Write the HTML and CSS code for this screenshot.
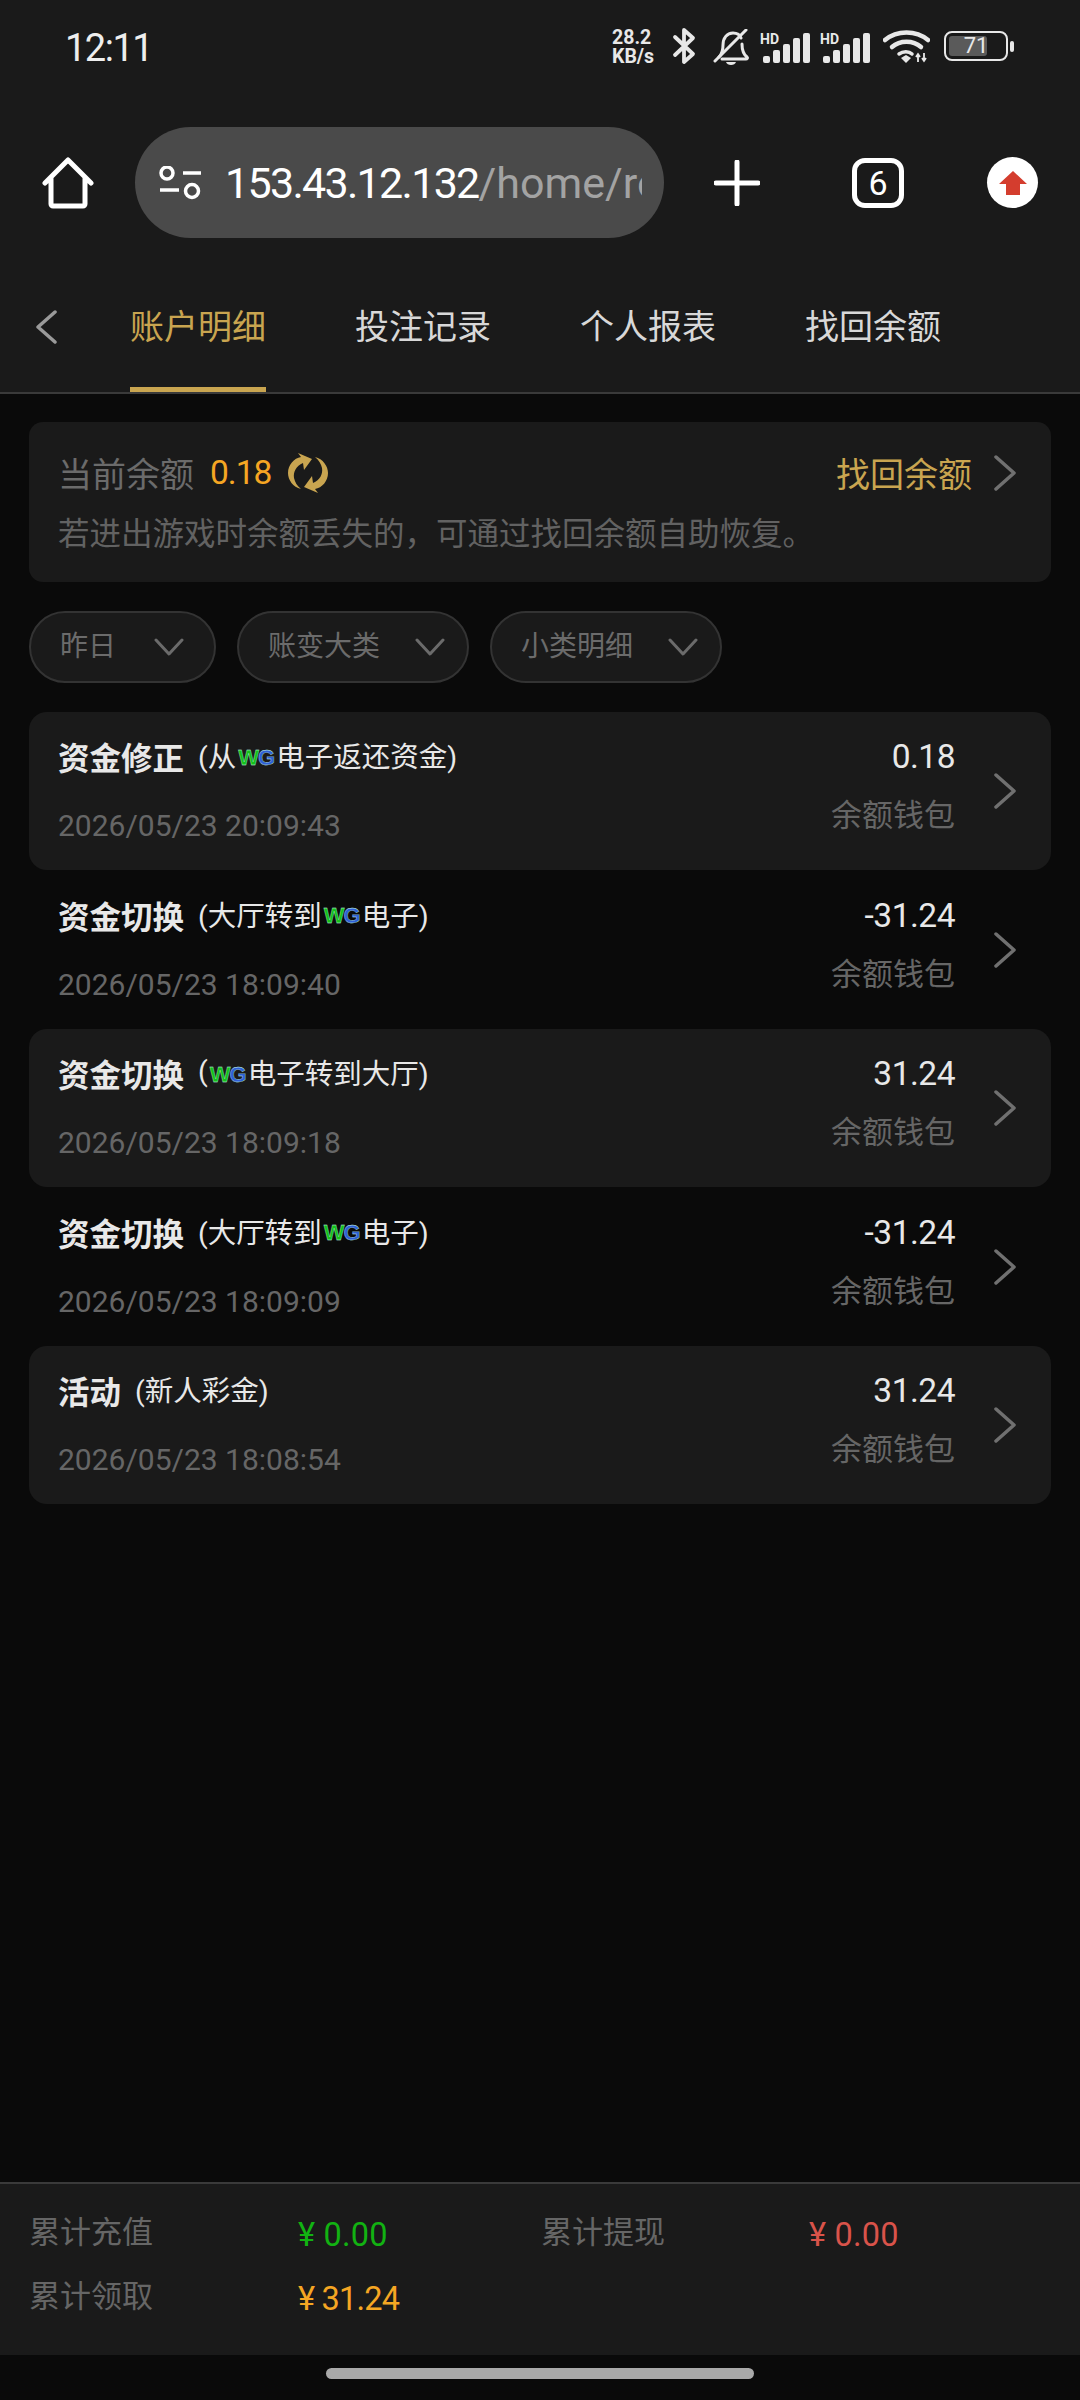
FILE: index.html
```html
<!DOCTYPE html>
<html lang="zh-CN">
<head>
<meta charset="utf-8">
<title>账户明细</title>
<link rel="stylesheet" href="styles.css">
</head>
<body>
<div class="page">
  <header class="status">
    <span class="time">12:11</span>
    <div class="status-icons">
      <span class="speed">28.2<br>KB/s</span>
      <svg class="i-bt" viewBox="0 0 25 38"><path d="M3 10 21 27 12 35V3l9 8L3 28" fill="none" stroke="#e8e8e8" stroke-width="3.8" stroke-linejoin="round" stroke-linecap="round"/></svg>
      <svg class="i-bell" viewBox="0 0 36 38"><path d="M6 28c3-3 4-6 4-12 0-7 4-12 10-12 4 0 7 2 8 5M29 15c0 6 1 10 5 13 1 1 0 2-1 2H9" fill="none" stroke="#e8e8e8" stroke-width="3" stroke-linecap="round"/><path d="M2 32 33 1" stroke="#e8e8e8" stroke-width="3" stroke-linecap="round"/><path d="M13 33h10c-1 4-9 4-10 0z" fill="#e8e8e8"/></svg>
      <div class="sig"><span class="hd">HD</span><svg class="i-sig" viewBox="0 0 50 32"><g fill="#e8e8e8"><rect x="3" y="24" width="7" height="7" rx="2"/><rect x="13" y="18" width="7" height="13" rx="2"/><rect x="23" y="12" width="7" height="19" rx="2"/><rect x="33" y="6" width="7" height="25" rx="2"/><rect x="43" y="1" width="7" height="30" rx="2"/></g></svg></div>
      <div class="sig"><span class="hd">HD</span><svg class="i-sig" viewBox="0 0 50 32"><g fill="#e8e8e8"><rect x="3" y="24" width="7" height="7" rx="2"/><rect x="13" y="18" width="7" height="13" rx="2"/><rect x="23" y="12" width="7" height="19" rx="2"/><rect x="33" y="6" width="7" height="25" rx="2"/><rect x="43" y="1" width="7" height="30" rx="2"/></g></svg></div>
      <svg class="i-wifi" viewBox="0 0 47 35"><g fill="none" stroke="#e8e8e8" stroke-width="4.500" stroke-linecap="round"><path d="M2 11c12-10 31-10 43 0"/><path d="M9 18c8-7 21-7 29 0"/><path d="M16 25c4-3 10-3 13 0" stroke-width="3.500"/></g><path d="M18 29l5-3 5 3-5 5z" fill="#e8e8e8"/><path d="M35 25v8M33 28l2-3 2 3M41 24v8M39 29l2 3 2-3" fill="none" stroke="#e8e8e8" stroke-width="1.800"/></svg>
      <div class="battery"><div class="battery-body"><div class="battery-fill"></div><span class="battery-num">71</span></div><div class="battery-nub"></div></div>
    </div>
  </header>

  <div class="browser">
    <svg class="i-home" viewBox="0 0 52 52"><path d="M3 26 26 3l23 23M9 21v26a2 2 0 0 0 2 2h30a2 2 0 0 0 2-2V21" fill="none" stroke="#fff" stroke-width="5" stroke-linecap="round" stroke-linejoin="round"/></svg>
    <div class="address">
      <svg class="i-tune" viewBox="0 0 42 34"><g fill="none" stroke="#fff" stroke-width="3.500"><circle cx="8" cy="7" r="6"/><circle cx="33" cy="25" r="6.500"/><path d="M24 7h18M1 24h19"/></g></svg>
      <div class="url"><span class="host">153.43.12.132</span><span class="path">/home/record</span></div>
    </div>
    <svg class="i-plus" viewBox="0 0 46 46"><path d="M2 23h42M23 2v42" stroke="#fff" stroke-width="5" stroke-linecap="round"/></svg>
    <div class="tabcount">6</div>
    <div class="upload"><svg class="i-up" viewBox="0 0 28 26"><path d="M14 1 28 14H21V25H7V14H0z" fill="#d43d2e"/></svg></div>
  </div>

  <nav class="tabs">
    <svg class="i-back" viewBox="0 0 22 34"><path d="M20 2 3 17l17 15" fill="none" stroke="#9a9a9a" stroke-width="3.500" stroke-linecap="round" stroke-linejoin="round"/></svg>
    <div class="tab tab-on">账户明细</div>
    <div class="tab">投注记录</div>
    <div class="tab">个人报表</div>
    <div class="tab">找回余额</div>
  </nav>

  <main class="main">
    <section class="balance">
      <div class="balance-top">
        <span class="balance-label">当前余额</span>
        <span class="balance-val">0.18</span>
        <svg class="i-refresh" viewBox="0 0 42 44"><g fill="#c9a550"><path d="M25 8 17 19l-1-7C9 15 6 21 7 27c1 4 3 8 7 11C6 36 1 29 1 22 1 14 7 7 14 6L11 2z"/><path d="M17 36 25 25l1 7c7-3 10-9 9-15-1-4-3-8-7-11 8 2 13 9 13 16 0 8-6 15-13 16l3 4z"/></g></svg>
        <span class="balance-link">找回余额</span>
        <svg class="i-chev" viewBox="0 0 24 36"><path d="M3 2 21 18 3 34" fill="none" stroke="#707070" stroke-width="3.500" stroke-linecap="round" stroke-linejoin="round"/></svg>
      </div>
      <p class="balance-note">若进出游戏时余额丢失的，可通过找回余额自助恢复。</p>
    </section>

    <div class="filters">
      <div class="filter filter-s"><span>昨日</span><svg class="i-down" viewBox="0 0 30 18"><path d="M2 2l13 14L28 2" fill="none" stroke="#6b6b6b" stroke-width="3" stroke-linecap="round" stroke-linejoin="round"/></svg></div>
      <div class="filter"><span>账变大类</span><svg class="i-down" viewBox="0 0 30 18"><path d="M2 2l13 14L28 2" fill="none" stroke="#6b6b6b" stroke-width="3" stroke-linecap="round" stroke-linejoin="round"/></svg></div>
      <div class="filter"><span>小类明细</span><svg class="i-down" viewBox="0 0 30 18"><path d="M2 2l13 14L28 2" fill="none" stroke="#6b6b6b" stroke-width="3" stroke-linecap="round" stroke-linejoin="round"/></svg></div>
    </div>

    <div class="list">
      <article class="row row-alt">
        <div class="row-left">
          <div class="row-title"><b>资金修正</b><span class="row-sub">(从<span class="wg"><i class="wg-w">W</i><i class="wg-g">G</i></span>电子返还资金)</span></div>
          <div class="row-date">2026/05/23 20:09:43</div>
        </div>
        <div class="row-right"><div class="row-amt">0.18</div><div class="row-wallet">余额钱包</div></div>
        <svg class="i-chev" viewBox="0 0 24 36"><path d="M3 2 21 18 3 34" fill="none" stroke="#707070" stroke-width="3.500" stroke-linecap="round" stroke-linejoin="round"/></svg>
      </article>
      <article class="row">
        <div class="row-left">
          <div class="row-title"><b>资金切换</b><span class="row-sub">(大厅转到<span class="wg"><i class="wg-w">W</i><i class="wg-g">G</i></span>电子)</span></div>
          <div class="row-date">2026/05/23 18:09:40</div>
        </div>
        <div class="row-right"><div class="row-amt">-31.24</div><div class="row-wallet">余额钱包</div></div>
        <svg class="i-chev" viewBox="0 0 24 36"><path d="M3 2 21 18 3 34" fill="none" stroke="#707070" stroke-width="3.500" stroke-linecap="round" stroke-linejoin="round"/></svg>
      </article>
      <article class="row row-alt">
        <div class="row-left">
          <div class="row-title"><b>资金切换</b><span class="row-sub">(<span class="wg"><i class="wg-w">W</i><i class="wg-g">G</i></span>电子转到大厅)</span></div>
          <div class="row-date">2026/05/23 18:09:18</div>
        </div>
        <div class="row-right"><div class="row-amt">31.24</div><div class="row-wallet">余额钱包</div></div>
        <svg class="i-chev" viewBox="0 0 24 36"><path d="M3 2 21 18 3 34" fill="none" stroke="#707070" stroke-width="3.500" stroke-linecap="round" stroke-linejoin="round"/></svg>
      </article>
      <article class="row">
        <div class="row-left">
          <div class="row-title"><b>资金切换</b><span class="row-sub">(大厅转到<span class="wg"><i class="wg-w">W</i><i class="wg-g">G</i></span>电子)</span></div>
          <div class="row-date">2026/05/23 18:09:09</div>
        </div>
        <div class="row-right"><div class="row-amt">-31.24</div><div class="row-wallet">余额钱包</div></div>
        <svg class="i-chev" viewBox="0 0 24 36"><path d="M3 2 21 18 3 34" fill="none" stroke="#707070" stroke-width="3.500" stroke-linecap="round" stroke-linejoin="round"/></svg>
      </article>
      <article class="row row-alt">
        <div class="row-left">
          <div class="row-title"><b>活动</b><span class="row-sub">(新人彩金)</span></div>
          <div class="row-date">2026/05/23 18:08:54</div>
        </div>
        <div class="row-right"><div class="row-amt">31.24</div><div class="row-wallet">余额钱包</div></div>
        <svg class="i-chev" viewBox="0 0 24 36"><path d="M3 2 21 18 3 34" fill="none" stroke="#707070" stroke-width="3.500" stroke-linecap="round" stroke-linejoin="round"/></svg>
      </article>
    </div>
  </main>

  <footer class="totals">
    <span class="t-label">累计充值</span><span class="t-val t-green">¥ 0.00</span>
    <span class="t-label">累计提现</span><span class="t-val t-red">¥ 0.00</span>
    <span class="t-label">累计领取</span><span class="t-val t-orange">¥ 31.24</span>
  </footer>
  <div class="gesture"><div class="gesture-bar"></div></div>
</div>
</body>
</html>
```
FILE: styles.css
```css
* { box-sizing: border-box; }
html, body { margin: 0; padding: 0; }
body {
  background: #0a0a0a;
  font-family: Roboto, "Noto Sans CJK SC", sans-serif;
  color: #e8e8e8;
}
.page { width: 1080px; height: 2400px; display: flex; flex-direction: column; overflow: hidden; }
svg { display: block; flex: none; }

/* status bar */
.status { height: 100px; background: #1a1a1a; display: flex; justify-content: space-between; padding: 27px 65px 0; }
.time { font-size: 38px; line-height: 42px; letter-spacing: -1.5px; color: #eee; }
.status-icons { display: flex; align-items: flex-start; width: 403px; }
.speed { width: 60px; font-size: 19.500px; line-height: 19px; font-weight: 700; margin-top: 1px; }
.i-bt { width: 25px; height: 38px; }
.i-bell { width: 36px; height: 38px; margin-left: 16px; margin-top: 2px; }
.sig { width: 50px; height: 36px; margin-left: 11px; position: relative; margin-top: 5px; }
.sig + .sig { margin-left: 10px; }
.hd { position: absolute; left: 0; top: 0; font-size: 14px; line-height: 14px; font-weight: 700; }
.i-sig { width: 50px; height: 32px; }
.i-wifi { width: 47px; height: 35px; margin-left: 13px; margin-top: 2px; }
.battery { display: flex; align-items: center; margin-left: 14px; margin-top: 4px; }
.battery-body { width: 64px; height: 30px; border: 2.500px solid #e8e8e8; border-radius: 8px; padding: 3px; position: relative; }
.battery-fill { width: 71%; height: 100%; background: #5a5a5a; border-radius: 3px; }
.battery-num { position: absolute; left: 0; right: 0; top: 0; text-align: center; font-size: 22px; line-height: 25px; }
.battery-nub { width: 4px; height: 11px; background: #e8e8e8; border-radius: 2px; margin-left: 2px; }

/* browser bar */
.browser { height: 165px; background: #1a1a1a; display: flex; align-items: center; padding-left: 42px; }
.i-home { width: 52px; height: 52px; }
.address { width: 529px; height: 111px; margin-left: 41px; background: #4a4a4a; border-radius: 56px; display: flex; align-items: center; padding-left: 24px; }
.i-tune { width: 42px; height: 34px; }
.url { width: 417px; margin-left: 24px; overflow: hidden; white-space: nowrap; font-size: 43px; letter-spacing: -1.700px; }
.host { color: #fff; }
.path { color: #a3a3a3; letter-spacing: 0; }
.i-plus { width: 46px; height: 46px; margin-left: 50px; }
.tabcount { width: 52px; height: 50px; margin-left: 92px; border: 5px solid #fff; border-radius: 13px; display: flex; align-items: center; justify-content: center; font-size: 34px; color: #fff; background: #1a1a1a; }
.upload { width: 51px; height: 51px; margin-left: 83px; border-radius: 50%; background: #fff; display: flex; align-items: center; justify-content: center; }
.i-up { width: 28px; height: 26px; }

/* tabs */
.tabs { height: 129px; background: #1a1a1a; border-bottom: 2px solid #3a3a3a; display: flex; align-items: center; padding-left: 35px; padding-bottom: 4px; }
.i-back { width: 22px; height: 34px; margin-right: 73px; }
.tab { width: 136px; margin-right: 89px; font-size: 34px; line-height: 124px; height: 127px; color: #d8d8d8; white-space: nowrap; margin-top: 4px; }
.tab-on { color: #c9a550; background: linear-gradient(#c9a550, #c9a550) no-repeat 0 100% / 100% 5px; }

/* main */
.main { flex: 1; padding: 28px 29px 0; }
.balance { height: 160px; background: #1a1a1a; border-radius: 14px; padding: 28px 29px 0; }
.balance-top { display: flex; align-items: center; height: 44px; font-size: 34px; }
.balance-label { color: #6b6b6b; }
.balance-val { color: #f5a623; margin-left: 16px; font-size: 33.500px; letter-spacing: -1px; }
.i-refresh { width: 42px; height: 44px; margin-left: 16px; margin-top: 1px; }
.balance-link { color: #c9a550; margin-left: auto; }
.balance-top .i-chev { margin-left: 21px; margin-right: 5px; margin-top: 2px; }
.i-chev { width: 24px; height: 36px; }
.balance-note { margin: 19px 0 0; font-size: 31.500px; line-height: 44px; color: #626262; white-space: nowrap; }

.filters { display: flex; gap: 21px; margin-top: 29px; }
.filter { width: 232px; height: 72px; border: 2px solid #333; border-radius: 36px; background: #1a1a1a; display: flex; align-items: center; justify-content: space-between; padding: 0 22px 0 29px; font-size: 28px; line-height: 66px; color: #6b6b6b; }
.filter-s { width: 187px; padding-right: 30px; }
.i-down { width: 30px; height: 18px; }

.list { margin-top: 29px; }
.row { height: 158px; margin-bottom: 0.500px; border-radius: 18px; display: flex; align-items: center; padding: 0 34px 0 29px; }
.row-alt { background: #1a1a1a; }
.row-left { align-self: flex-start; padding-top: 24px; }
.row-title { display: flex; align-items: center; height: 40px; white-space: nowrap; }
.row-title b { font-size: 31.500px; color: #e8e8e8; font-weight: 700; }
.row-sub { font-size: 28.500px; margin-left: 14px; color: #e8e8e8; display: flex; align-items: center; margin-top: -3px; }
.wg { display: inline-flex; width: 40px; justify-content: center; font-family: "Liberation Sans", sans-serif; font-size: 22px; font-weight: 700; letter-spacing: -1px; line-height: 1; margin-top: 6px; }
.wg i { font-style: normal; -webkit-text-stroke: 0.300px #cfe; }
.wg-w { color: #14c01a; }
.wg-g { color: #2f5fd6; }
.row-date { margin-top: 30px; font-size: 30px; line-height: 40px; color: #666; }
.row-right { margin-left: auto; margin-right: 38px; align-self: flex-start; text-align: right; padding-top: 25px; }
.row-amt { font-size: 33.500px; line-height: 40px; color: #e8e8e8; letter-spacing: -0.500px; }
.row-wallet { margin-top: 19px; font-size: 31px; line-height: 40px; color: #666; }

/* totals */
.totals { height: 173px; background: #1a1a1a; border-top: 2px solid #3a3a3a; display: grid; grid-template-columns: 269px 243px 268px 1fr; grid-auto-rows: 64px; align-items: center; padding: 19px 0 0 29px; }
.t-label { font-size: 31px; line-height: 36px; color: #666; margin-top: -4px; }
.t-val { font-size: 32.500px; letter-spacing: 0.200px; }
.t-green { color: #12b212; }
.t-red { color: #d9534a; }
.t-orange { color: #f5a623; letter-spacing: -0.800px; }

.gesture { height: 45px; display: flex; justify-content: center; padding-top: 13px; }
.gesture-bar { width: 428px; height: 11px; border-radius: 6px; background: #a9a9a9; }
```
